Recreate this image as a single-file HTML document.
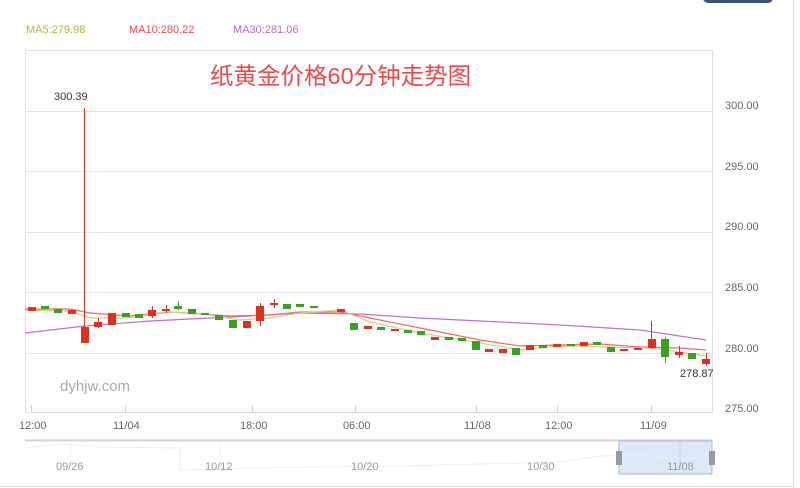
<!DOCTYPE html>
<html><head><meta charset="utf-8"><style>
body{margin:0;width:800px;height:488px;background:#fff;overflow:hidden;font-family:"Liberation Sans","Noto Sans CJK SC",sans-serif;}
</style></head><body>
<svg width="800" height="488" xmlns="http://www.w3.org/2000/svg" style="position:absolute;left:0;top:0;font-family:'Liberation Sans','Noto Sans CJK SC',sans-serif">
<rect x="703" y="-8" width="70" height="11" rx="5" fill="#3c5478"/>
<line x1="793.5" y1="0" x2="793.5" y2="488" stroke="#ddd"/>
<line x1="0" y1="486.5" x2="794" y2="486.5" stroke="#ddd"/>
<text x="26" y="33" font-size="11" fill="#b3b340">MA5:279.98</text>
<text x="129" y="33" font-size="11" fill="#f04a4a">MA10:280.22</text>
<text x="233" y="33" font-size="11" fill="#b070c0">MA30:281.06</text>
<rect x="25.5" y="50.5" width="687" height="362" fill="none" stroke="#d8e0e8"/>
<g stroke="#e4e4e4">
<line x1="26" y1="111.5" x2="712" y2="111.5"/><line x1="26" y1="171.5" x2="712" y2="171.5"/>
<line x1="26" y1="232.5" x2="712" y2="232.5"/><line x1="26" y1="292.5" x2="712" y2="292.5"/>
<line x1="26" y1="353.5" x2="712" y2="353.5"/>
</g>
<g font-size="11" fill="#666">
<text x="725" y="109">300.00</text><text x="725" y="170">295.00</text><text x="725" y="230">290.00</text>
<text x="725" y="291">285.00</text><text x="725" y="352">280.00</text><text x="725" y="412">275.00</text>
<text x="19" y="429">12:00</text><text x="113" y="429">11/04</text><text x="240" y="429">18:00</text>
<text x="343" y="429">06:00</text><text x="464" y="429">11/08</text><text x="545" y="429">12:00</text><text x="640" y="429">11/09</text>
</g>
<g stroke="#ccd" ><line x1="31.5" y1="405" x2="31.5" y2="412"/><line x1="125.5" y1="405" x2="125.5" y2="412"/><line x1="252.5" y1="405" x2="252.5" y2="412"/><line x1="355.5" y1="405" x2="355.5" y2="412"/><line x1="476.5" y1="405" x2="476.5" y2="412"/><line x1="557.5" y1="405" x2="557.5" y2="412"/><line x1="651.5" y1="405" x2="651.5" y2="412"/></g>
<text x="210" y="84" font-size="23.5" fill="#f04848">纸黄金价格60分钟走势图</text>
<text x="54" y="100" font-size="11" fill="#333">300.39</text>
<text x="680" y="377" font-size="11" fill="#333">278.87</text>
<text x="60" y="391" font-size="15" fill="#aaa">dyhjw.com</text>
<polyline fill="none" stroke="#c070d0" stroke-width="1.2" points="25,333 85,326 150,321 250,316 300,313 360,314 420,318 500,322 560,325 640,330 706,340"/>
<polyline fill="none" stroke="#f06a6a" stroke-width="1.2" points="25,309 70,309 90,313 130,316 170,312 230,316 270,315 300,312 340,312 380,320 430,330 480,340 520,346 560,345 600,344 640,347 680,348 706,350"/>
<polyline fill="none" stroke="#d0d080" stroke-width="1.2" points="25,310 70,311 90,318 125,318 170,312 210,315 240,320 270,318 300,313 340,310 370,322 420,333 480,343 520,350 560,346 610,347 650,348 680,352 706,356"/>
<g stroke-width="1">
<line x1="84.5" y1="108" x2="84.5" y2="343" stroke="#e03020"/>
<line x1="651.5" y1="321" x2="651.5" y2="349" stroke="#e03020"/>
<line x1="665.5" y1="337" x2="665.5" y2="363" stroke="#3aa020"/>
<line x1="260.5" y1="303" x2="260.5" y2="326" stroke="#e03020"/>
<line x1="178.5" y1="301" x2="178.5" y2="310" stroke="#3aa020"/>
<line x1="152.5" y1="306" x2="152.5" y2="318" stroke="#e03020"/>
<line x1="98.5" y1="318" x2="98.5" y2="328" stroke="#e03020"/>
<line x1="274.5" y1="299" x2="274.5" y2="308" stroke="#e03020"/>
<line x1="166.5" y1="305" x2="166.5" y2="313" stroke="#e03020"/>
<line x1="679.5" y1="346" x2="679.5" y2="358" stroke="#e03020"/>
<line x1="706.5" y1="353" x2="706.5" y2="366" stroke="#e03020"/>
</g>
<g>
<rect x="28" y="307" width="8" height="4" fill="#e03020"/>
<rect x="41" y="306" width="8" height="3" fill="#3aa020"/>
<rect x="54" y="309" width="8" height="4" fill="#3aa020"/>
<rect x="68" y="310" width="8" height="4" fill="#e03020"/>
<rect x="81" y="327" width="8" height="16" fill="#e03020"/>
<rect x="94" y="322" width="8" height="5" fill="#e03020"/>
<rect x="108" y="313" width="8" height="12" fill="#e03020"/>
<rect x="122" y="313" width="8" height="4" fill="#3aa020"/>
<rect x="135" y="314" width="8" height="4" fill="#3aa020"/>
<rect x="148" y="310" width="8" height="6" fill="#e03020"/>
<rect x="162" y="309" width="8" height="2" fill="#e03020"/>
<rect x="174" y="306" width="8" height="3" fill="#3aa020"/>
<rect x="188" y="309" width="8" height="5" fill="#3aa020"/>
<rect x="201" y="313" width="8" height="2" fill="#3aa020"/>
<rect x="215" y="315" width="8" height="5" fill="#3aa020"/>
<rect x="229" y="320" width="8" height="8" fill="#3aa020"/>
<rect x="243" y="321" width="8" height="7" fill="#e03020"/>
<rect x="256" y="306" width="8" height="15" fill="#e03020"/>
<rect x="270" y="303" width="8" height="2" fill="#e03020"/>
<rect x="283" y="304" width="8" height="5" fill="#3aa020"/>
<rect x="296" y="304" width="8" height="3" fill="#3aa020"/>
<rect x="310" y="306" width="8" height="2" fill="#3aa020"/>
<rect x="337" y="309" width="8" height="3" fill="#e03020"/>
<rect x="350" y="323" width="8" height="7" fill="#3aa020"/>
<rect x="364" y="326" width="8" height="3" fill="#e03020"/>
<rect x="377" y="327" width="8" height="3" fill="#3aa020"/>
<rect x="391" y="329" width="8" height="2" fill="#e03020"/>
<rect x="404" y="330" width="8" height="3" fill="#3aa020"/>
<rect x="417" y="331" width="8" height="4" fill="#3aa020"/>
<rect x="431" y="337" width="8" height="3" fill="#e03020"/>
<rect x="445" y="337" width="8" height="3" fill="#3aa020"/>
<rect x="458" y="338" width="8" height="3" fill="#3aa020"/>
<rect x="472" y="341" width="8" height="9" fill="#3aa020"/>
<rect x="485" y="349" width="8" height="3" fill="#e03020"/>
<rect x="499" y="349" width="8" height="4" fill="#e03020"/>
<rect x="512" y="348" width="8" height="7" fill="#3aa020"/>
<rect x="526" y="345" width="8" height="5" fill="#e03020"/>
<rect x="539" y="345" width="8" height="3" fill="#3aa020"/>
<rect x="553" y="344" width="8" height="3" fill="#e03020"/>
<rect x="567" y="344" width="8" height="2" fill="#3aa020"/>
<rect x="580" y="342" width="8" height="4" fill="#e03020"/>
<rect x="593" y="342" width="8" height="3" fill="#3aa020"/>
<rect x="607" y="347" width="8" height="5" fill="#3aa020"/>
<rect x="620" y="349" width="8" height="2" fill="#e03020"/>
<rect x="634" y="348" width="8" height="2" fill="#e03020"/>
<rect x="648" y="339" width="8" height="9" fill="#e03020"/>
<rect x="661" y="339" width="8" height="18" fill="#3aa020"/>
<rect x="675" y="352" width="8" height="3" fill="#e03020"/>
<rect x="688" y="353" width="8" height="6" fill="#3aa020"/>
<rect x="702" y="359" width="8" height="5" fill="#e03020"/>
</g>
<line x1="25" y1="440.5" x2="712" y2="440.5" stroke="#d4d4d4" stroke-width="2"/>
<rect x="619" y="441" width="93" height="33" fill="#dde9f7" stroke="#a8b8c8"/>
<polyline fill="none" stroke="#e8eef4" points="25,448 60,444 100,447 180,448 180,470 250,468 320,467 400,466 480,464 560,462 600,456 640,455 680,459 712,458"/>
<line x1="71" y1="441" x2="71" y2="470" stroke="#f0f0f0"/><line x1="220" y1="441" x2="220" y2="470" stroke="#f0f0f0"/><line x1="680" y1="441" x2="680" y2="470" stroke="#c8d6e4"/>
<rect x="616" y="451" width="6" height="14" fill="#999"/>
<rect x="709" y="451" width="6" height="14" fill="#999"/>
<g font-size="11" fill="#999">
<text x="56" y="470">09/26</text><text x="205" y="470">10/12</text><text x="351" y="470">10/20</text><text x="527" y="470">10/30</text><text x="667" y="470">11/08</text>
</g>
</svg>
</body></html>
